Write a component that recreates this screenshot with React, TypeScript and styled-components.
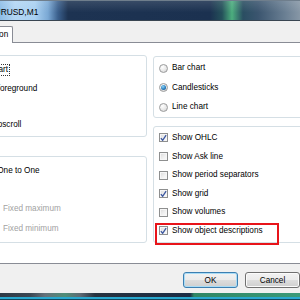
import React from "react";
import styled, { createGlobalStyle } from "styled-components";

const Global = createGlobalStyle`
  html, body { margin: 0; padding: 0; width: 300px; height: 300px; overflow: hidden; background: #fff; }
  #root { width: 300px; height: 300px; overflow: hidden; }
  * { box-sizing: border-box; }
`;

const Dialog = styled.div`
  margin-left: -68px;
  width: 378px;
  height: 300px;
  display: flex;
  flex-direction: column;
  font-family: "Liberation Sans", Arial, sans-serif;
  font-size: 8.2px;
  color: #000;
`;

const TitleBar = styled.div`
  flex: none;
  height: 21px;
  display: flex;
  align-items: center;
  padding: 2px 0 0 57px;
  border-top: 1px solid #6f7e8c;
  border-bottom: 1px solid #3a4652;
  font-size: 8.4px;
  color: #000;
  background:
    linear-gradient(to bottom, rgba(255, 255, 255, 0.12) 0%, rgba(255, 255, 255, 0) 60%),
    linear-gradient(
      to right,
      #5f8fbf 56px,
      #8dbde6 68px,
      #b3d6f3 83px,
      #a9d0f1 103px,
      #7aa8d4 116px,
      #3a5f8c 126px,
      #1d3352 136px,
      #1b3150 278px,
      #24505a 290px,
      #4cae7e 300px,
      #2a4e62 311px,
      #3b556f 326px,
      #6a7f93 353px,
      #8797a6 368px
    );
`;

const Client = styled.div`
  flex: none;
  display: flex;
  flex-direction: column;
  background: #f0f0f0;
`;

const TabControl = styled.div`
  margin: 0 6px;
  display: flex;
  flex-direction: column;
`;

const TabStrip = styled.div`
  height: 22px;
  display: flex;
  align-items: flex-end;
  padding-left: 30px;
  border-bottom: 1px solid #898c95;
`;

const Tab = styled.div<{ $active?: boolean }>`
  height: 17px;
  margin-bottom: ${(p) => (p.$active ? "-1px" : "0")};
  display: flex;
  align-items: center;
  padding: 0 4px 1px 6px;
  border: 1px solid #898c95;
  border-bottom: none;
  border-radius: 2px 2px 0 0;
  background: ${(p) => (p.$active ? "#ffffff" : "linear-gradient(#f2f2f2, #e3e3e3)")};
`;

const TabPage = styled.div`
  height: 221px;
  background: #ffffff;
  border: 1px solid #898c95;
  border-top: none;
  padding: 12px 0 0 6px;
  display: grid;
  grid-template-columns: 202px 1fr;
  column-gap: 6px;
  align-items: start;
`;

const Column = styled.div<{ $gap: number; $top?: number }>`
  display: flex;
  flex-direction: column;
  gap: ${(p) => p.$gap}px;
  margin-top: ${(p) => p.$top ?? 0}px;
`;

const GroupBox = styled.div<{ $pt: number; $pb: number }>`
  border: 1px solid #d5dfe5;
  border-radius: 3px;
  padding: ${(p) => p.$pt}px 0 ${(p) => p.$pb}px 5px;
  display: flex;
  flex-direction: column;
`;

const Row = styled.div<{ $h: number }>`
  position: relative;
  height: ${(p) => p.$h}px;
  display: flex;
  align-items: center;
  gap: 4px;
  white-space: nowrap;
`;

const Label = styled.span<{ $disabled?: boolean; $focus?: boolean }>`
  color: ${(p) => (p.$disabled ? "#a2a2a2" : "#000")};
  line-height: 10px;
  padding: 0 1px;
  margin-left: -1px;
  outline: ${(p) => (p.$focus ? "1px dotted #333" : "none")};
`;

const CheckBox = styled.span`
  flex: none;
  width: 9px;
  height: 9px;
  border: 1px solid #8e8f8f;
  background: linear-gradient(135deg, #d9d9d9 0%, #f2f2f2 60%, #fbfbfb 100%);
  box-shadow: inset 0 0 0 1px #f6f6f6;
  display: flex;
  align-items: center;
  justify-content: center;
`;

const Radio = styled.span<{ $on?: boolean }>`
  flex: none;
  width: 9px;
  height: 9px;
  border-radius: 50%;
  border: 1px solid #9a9b9c;
  background: radial-gradient(circle at 35% 30%, #ffffff 0%, #eaeaea 50%, #cfcfcf 100%);
  display: flex;
  align-items: center;
  justify-content: center;
  &::after {
    content: "";
    display: ${(p) => (p.$on ? "block" : "none")};
    width: 5px;
    height: 5px;
    border-radius: 50%;
    background: radial-gradient(circle at 40% 35%, #8fd4f6 0%, #2a7fc0 55%, #0b3d6c 100%);
  }
`;

const ValueInput = styled.span`
  flex: none;
  width: 48px;
  height: 14px;
  border: 1px solid #afb4b9;
  background: #f4f4f4;
`;

const Highlight = styled.span`
  position: absolute;
  left: -4px;
  top: 1.3px;
  width: 124px;
  height: 22px;
  border: 2px solid #e8141a;
  pointer-events: none;
`;

const ButtonBar = styled.div`
  height: 29px;
  display: flex;
  justify-content: flex-end;
  align-items: flex-start;
  gap: 7px;
  padding: 8px 10px 0 0;
`;

const Button = styled.button<{ $default?: boolean }>`
  width: 55px;
  height: 16px;
  padding: 0;
  font: inherit;
  color: #000;
  border: 1px solid ${(p) => (p.$default ? "#3c7fb1" : "#707070")};
  border-radius: 3px;
  background: linear-gradient(to bottom, #f2f2f2 0%, #ebebeb 50%, #dddddd 51%, #cfcfcf 100%);
  box-shadow: inset 0 0 0 1px ${(p) => (p.$default ? "#a9dcf6" : "#fbfbfb")};
`;

const BottomFrame = styled.div`
  flex: none;
  height: 7px;
  background:
    linear-gradient(to bottom, rgba(0, 0, 0, 0) 0px, rgba(0, 0, 0, 0) 4px, #28a8cf 4px, #28a8cf 6px, #12465c 6px),
    linear-gradient(
      to right,
      #2e3945 68px,
      #3b4753 98px,
      #65717a 113px,
      #4f8e78 133px,
      #5e6a74 148px,
      #27323f 163px,
      #1b2c45 258px,
      #2e8664 262px,
      #3a9a78 368px
    );
`;

function Check({ checked }: { checked?: boolean }) {
  return (
    <CheckBox>
      {checked && (
        <svg width="8" height="8" viewBox="0 0 8 8">
          <path d="M1 4.2 L3 6.6 L7 0.8" fill="none" stroke="#3d58a0" strokeWidth="1.5" strokeLinejoin="round" />
        </svg>
      )}
    </CheckBox>
  );
}

const chartOptions = [
  { label: "Show OHLC", checked: true },
  { label: "Show Ask line", checked: false },
  { label: "Show period separators", checked: false },
  { label: "Show grid", checked: true },
  { label: "Show volumes", checked: false },
];

export default function App() {
  return (
    <>
      <Global />
      <Dialog>
        <TitleBar>EURUSD,M1</TitleBar>
        <Client>
          <TabControl>
            <TabStrip>
              <Tab $active>Common</Tab>
            </TabStrip>
            <TabPage>
              <Column $gap={19}>
                <GroupBox $pt={5} $pb={1.4}>
                  <Row $h={18.4}>
                    <Check />
                    <Label $focus>Offline chart</Label>
                  </Row>
                  <Row $h={18.4}>
                    <Check />
                    <Label>Chart on foreground</Label>
                  </Row>
                  <Row $h={18.4}>
                    <Check />
                    <Label>Shift</Label>
                  </Row>
                  <Row $h={18.4}>
                    <Check />
                    <Label>Chart autoscroll</Label>
                  </Row>
                </GroupBox>
                <GroupBox $pt={4.2} $pb={3.6}>
                  <Row $h={19.3}>
                    <Check />
                    <Label>Scale fix One to One</Label>
                  </Row>
                  <Row $h={19.3}>
                    <Check />
                    <Label>Scale fix</Label>
                  </Row>
                  <Row $h={19.3}>
                    <ValueInput />
                    <Label $disabled>Fixed maximum</Label>
                  </Row>
                  <Row $h={19.3}>
                    <ValueInput />
                    <Label $disabled>Fixed minimum</Label>
                  </Row>
                </GroupBox>
              </Column>
              <Column $gap={8} $top={1}>
                <GroupBox $pt={1.3} $pb={0.2}>
                  <Row $h={19.5}>
                    <Radio />
                    <Label>Bar chart</Label>
                  </Row>
                  <Row $h={19.5}>
                    <Radio $on />
                    <Label>Candlesticks</Label>
                  </Row>
                  <Row $h={19.5}>
                    <Radio />
                    <Label>Line chart</Label>
                  </Row>
                </GroupBox>
                <GroupBox $pt={1.7} $pb={1.7}>
                  {chartOptions.map((o) => (
                    <Row $h={18.6} key={o.label}>
                      <Check checked={o.checked} />
                      <Label>{o.label}</Label>
                    </Row>
                  ))}
                  <Row $h={18.6}>
                    <Check checked />
                    <Label>Show object descriptions</Label>
                    <Highlight />
                  </Row>
                </GroupBox>
              </Column>
            </TabPage>
          </TabControl>
          <ButtonBar>
            <Button $default>OK</Button>
            <Button>Cancel</Button>
          </ButtonBar>
        </Client>
        <BottomFrame />
      </Dialog>
    </>
  );
}
